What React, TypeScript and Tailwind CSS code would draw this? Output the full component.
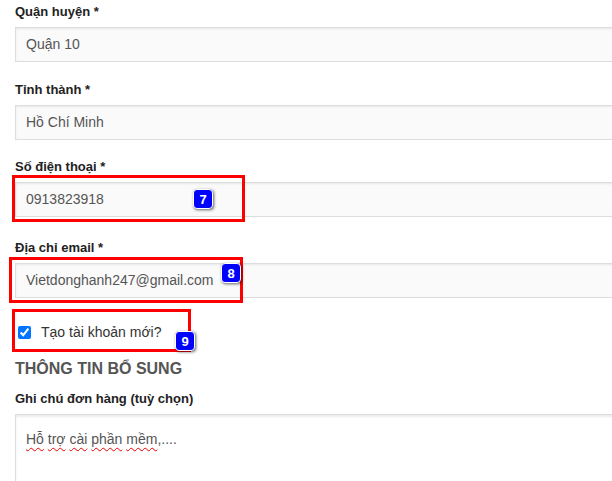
import React from 'react'

const font = { fontFamily: '"Liberation Sans", Arial, sans-serif' }

function Badge({ n }: { n: number }) {
  return (
    <div className="w-5 h-5 rounded-[4px] bg-[#0000ff] border-[1.5px] border-white shadow-[1px_1px_3px_rgba(0,0,0,0.6)] flex items-center justify-center text-white text-[13px] font-bold leading-none">
      {n}
    </div>
  )
}

function Field({ label, value, top }: { label: string; value: string; top: string }) {
  return (
    <div className={top}>
      <div className="h-5 leading-5 text-[13px] font-bold text-[#222] mb-[5px]">{label}</div>
      <div className="h-[35px] w-[640px] border border-[#ddd] bg-[#fafafa] shadow-[inset_0_1px_2px_rgba(0,0,0,0.08)] flex items-center px-[10px] text-[14px] text-[#555]">
        {value}
      </div>
    </div>
  )
}

const Wavy = ({ children }: { children: React.ReactNode }) => (
  <span className="underline decoration-wavy decoration-[#e00] decoration-1 underline-offset-[3px]">{children}</span>
)

export default function App() {
  return (
    <div className="relative w-[612px] h-[481px] overflow-hidden bg-white" style={font}>
      <div className="pl-[15px] pt-[2px]">
        <Field label="Quận huyện *" value="Quận 10" top="" />
        <Field label="Tỉnh thành *" value="Hồ Chí Minh" top="mt-[18px]" />
        <Field label="Số điện thoại *" value="0913823918" top="mt-[17px]" />
        <Field label="Địa chỉ email *" value="Vietdonghanh247@gmail.com" top="mt-[21px]" />

        <label className="flex items-center gap-[10px] mt-[24px] pl-[3px] h-5 text-[14px] text-[#333]">
          <input type="checkbox" defaultChecked className="w-[13px] h-[13px] m-0 accent-[#0075ff]" />
          <span>Tạo tài khoản mới?</span>
        </label>

        <div className="mt-[17px] text-[16px] font-bold text-[#555] leading-5">THÔNG TIN BỔ SUNG</div>

        <div className="mt-[10px] h-5 leading-5 text-[13px] font-bold text-[#222] mb-[5px]">Ghi chú đơn hàng (tuỳ chọn)</div>
        <div className="w-[640px] h-[120px] border border-[#ddd] bg-white shadow-[inset_0_2px_2px_rgba(0,0,0,0.08)] px-[10px] pt-[14px] text-[14px] text-[#555]">
          <Wavy>Hỗ</Wavy> <Wavy>trợ</Wavy> <Wavy>cài</Wavy> <Wavy>phần</Wavy> <Wavy>mềm</Wavy>,....
        </div>
      </div>

      {/* annotation boxes */}
      <div className="absolute left-[12px] top-[175px] w-[233px] h-[47px] border-[3px] border-[#ff0000]" />
      <div className="absolute left-[9px] top-[257px] w-[234px] h-[46px] border-[3px] border-[#ff0000]" />
      <div className="absolute left-[12px] top-[309px] w-[179px] h-[43px] border-[3px] border-[#ff0000]" />

      <div className="absolute left-[193px] top-[189px]"><Badge n={7} /></div>
      <div className="absolute left-[221px] top-[263px]"><Badge n={8} /></div>
      <div className="absolute left-[175px] top-[331px]"><Badge n={9} /></div>
    </div>
  )
}
